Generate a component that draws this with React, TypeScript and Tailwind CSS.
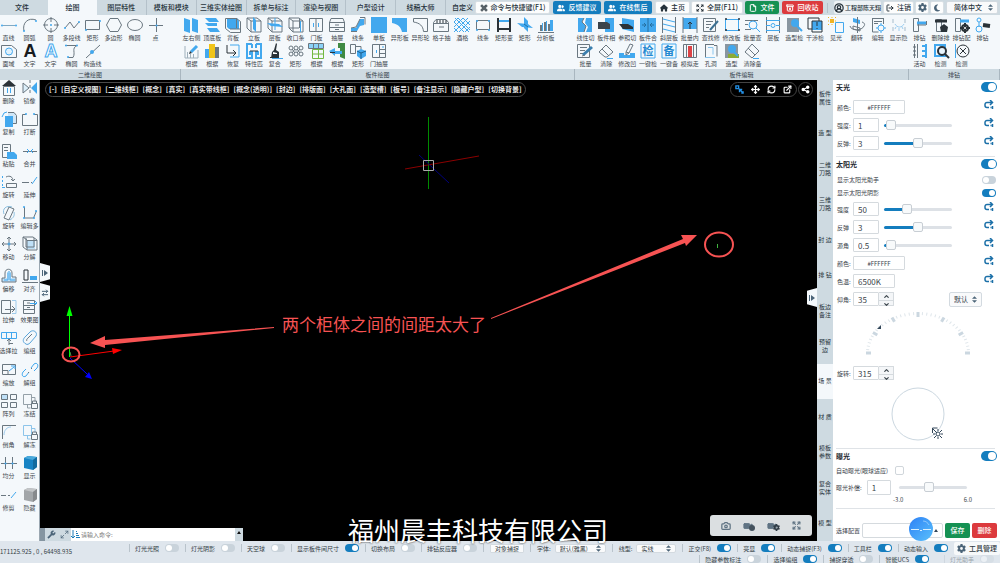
import React from "react"
import {
  ArchiveX as TrashIcon,
  ArrowUpDown as StepIcon,
  Camera as CameraIcon,
  ChevronDown,
  ChevronUp,
  Command as CommandIcon,
  Expand as ExpandIcon,
  File as FileIcon,
  LogOut as LogoutIcon,
  Maximize2 as GrowIcon,
  Move as MoveIcon,
  RefreshCw as RefreshIcon,
  ExternalLink as OpenIcon,
  CircleUserRound as UserIcon,
  Video as VideoIcon,
  Wrench as WrenchIcon,
} from "lucide-react"
import { FaGear, FaHouse, FaMoon, FaShareNodes, FaUserGroup } from "react-icons/fa6"

// ---- Icon drawings, all on a 16x16 grid ----

type Shape = { d: string; fill?: string; stroke?: string; w?: number }
type Icon = { shapes: Shape[]; text?: string; textFill?: string; textStroke?: string; textSize?: number }

const BLUE = "#42a8ee"
const GRAY = "#6a7780"
const DARK = "#2a3238"

const g = (d: string): Shape => ({ d, stroke: GRAY })
const k = (d: string, w = 2): Shape => ({ d, stroke: DARK, w })
const b = (d: string, w = 1): Shape => ({ d, stroke: BLUE, w })
const fb = (d: string): Shape => ({ d, fill: BLUE })
const fk = (d: string): Shape => ({ d, fill: DARK })
const fill = (d: string, color: string): Shape => ({ d, fill: color })
const c = (x: number, y: number, r: number) => `M${x - r} ${y}a${r} ${r} 0 1 0 ${2 * r} 0a${r} ${r} 0 1 0 ${-2 * r} 0`
const icon = (...shapes: Shape[]): Icon => ({ shapes })

const CABINET = "M1 1h10l4 3v11H5L1 11zM5 4h10M5 4v11M1 1l4 3"

const ICONS: Record<string, Icon> = {
  line: icon({ d: "M2 8.500h12", stroke: "#7fa9c4" }, fb(c(1, 8.5, 1)), fb(c(15, 8.5, 1))),
  arc: icon(g("M2 14C0 6 6 0 14 3"), fb(c(2, 14, 1)), fb(c(14, 4, 1))),
  circle: icon(g(c(8, 8, 6.5)), g("M8 0v5M8 11v5M0 8h5M11 8h5"), fb(c(8, 8, 1))),
  polyline: icon(g("M1 11l5-6 4 6 5-6"), fb(c(1, 11, 1)), fb(c(15, 5, 1))),
  rect: icon(g("M.5 3.500h14v9H.5z"), fb(c(1, 13, 1)), fb(c(15, 4, 1))),
  polygon: icon(g("M4 1.500h8l3.500 6.500-3.500 6.500H4L.5 8z")),
  ellipse: icon(g("M.5 8a7.500 5.500 0 1 0 15 0a7.500 5.500 0 1 0-15 0")),
  point: icon(g("M8.500 1v14M1 8.500h14"), fb(c(8.5, 8.5, 1))),
  region: icon(g("M.5 2.500h10l5 4v8H.5z"), { d: c(8, 8.5, 3.5), stroke: BLUE, fill: "#e0f1fc" }),
  textSolid: { shapes: [], text: "A", textFill: "#171b1f", textSize: 18 },
  textOutline: { shapes: [], text: "A", textFill: "#fff", textStroke: BLUE, textSize: 18 },
  curve: icon(g("M1 2.500h12c-6 3-1 7-4 12H4"), fb(c(2, 2.5, 1)), fb(c(13, 2.5, 1)), fb(c(4, 14, 1))),
  construct: icon(g("M1 15L15 2"), fb(c(7, 9, 2))),
  sidePanels: icon(fb("M1 1l6 2v13l-6-2zM9 1l6 2v13l-6-2z")),
  topBottom: icon(fb("M1 1h11l3 4H5zM1 6h12v3H4zM3 11h10l3 4H6z")),
  backPanel: icon(fb("M2 1h10l2 3v8H4L2 10z"), g("M.5 1.500h11l4 3v11h-10l-5-4zM5 12h10M11.500 1v10")),
  standPanel: icon(g(CABINET), fb("M7 0l3 3v12l-3-3z")),
  layerPanel: icon(g(CABINET), fb("M0 6l12 1 4 3-12-1z"), b("M8 1v12")),
  closeStrip: icon(g(CABINET), g("M11.500 1v10M1 11h10"), b("M12.500 4v11")),
  door: icon(g("M1.500 1.500h13v13h-13zM8 1v14"), b("M5.500 6v4M10.500 6v4")),
  drawer: icon(g("M2 1.500h12l1.500 4v9H.5v-9zM0 5.500h16M0 10.500h16M6 8h4M6 12.500h4")),
  molding: icon(fb("M10 2h4v6l-4 1-3 5H1v-3h5z"), g("M10 .5h5v7M1 11l5-1 4-8M1 14.500h6")),
  board: icon(fb("M0 0h16v16H0z")),
  shapedBoard: icon(fb("M0 1h15v14h-5C9 10 6 7 0 6z")),
  shapedOutline: icon(g("M.5 1.500h14v13h-4C10 9 7 6 .5 5z")),
  gridDrawer: icon(g("M3 2.500h10l2.500 3v9H.5v-9zM0 6.500h16"), k("M4 3v3M7 3v3M10 3v3M13 3v3", 1), g("M6 10h5")),
  wineRack: icon(b("M0 5l4-4 12 12M0 10l9-9 7 7M0 15L14 1M5 15L16 4M11 15l5-5M4 15l-4-4M10 15L0 5M15 15L1 1")),
  strip: icon(g("M1.500 3.500h13v9h-13z"), fb(c(2, 4, 1)), fb(c(14, 4, 1)), fb(c(2, 13, 1)), fb(c(14, 13, 1))),
  rectMorph: icon(k("M2 1v14M14 1v14M2 12h12"), b("M3 4h10", 2)),
  crossPlanes: icon(fb("M0 6l11 1 5 4-11-1z"), fb("M7 0l4 4v11l-4-4z"), { d: "M7 7l4 3", stroke: "#1c70a8" }),
  analysis: icon(fill("M2 8h2v6H2zM6 5h2v9H6zM10 7h2v7h-2z", GRAY), fb("M4 6h1v8H4zM8 4h1v10H8zM12 3h3v11h-3z"), g("M0 15.500h16")),
  editChart: icon({ d: "M2 3v12h13V7M4.500 9v6M7.500 11v4M10.500 11v4", stroke: "#9fb0bb" }, b("M8 9l6-6", 3), fk("M6 11l1-3 2 2z")),
  barChart: icon(fb("M1 6h4v9H1z"), fill("M5 1h6v14H5z", "#f0c419"), fill("M11 4h4v11h-4z", GRAY)),
  restore: icon(b("M5 2h9v12H5", 1), k("M2 2v8h8M8 7l3 3-3 3", 1)),
  match: icon(b("M6 1H1v14h5v-4H4V9h3M10 1h5v14h-5v-4h2V9H9M6 1v4M10 1v4", 2), k("M4 8h8", 1)),
  brush: icon(fk("M9 0l1 1-1 6 3 2v6H4l1-6 2-2z"), fill("M6 9l4 1v1H6z", "#fff"), b("M5 15.500h11"), k("M3 14.500h7", 1)),
  mesh: icon(g(`${c(3, 5, 2)}${c(8, 5, 2)}${c(13, 5, 2)}${c(3, 11, 2)}${c(8, 11, 2)}${c(13, 11, 2)}M4 6l3 4M7 6l-3 4M9 6l3 4M12 6l-3 4`)),
  gridPlan: icon(fill("M1 1h14v4H1z", "#8bd2f7"), g("M.5 .5h15v5H.5zM5.500 0v5M10.500 0v5"), { d: "M4.500 6.500h11v9h-11zM10.500 6v9M5 11h10", stroke: "#72b840" }),
  greenPanel: icon(fill("M9 0h7v16l-5-2V5H9z", "#3f8a43"), fb("M0 8l6-3v3h7v3H6v2z"), fk("M1 9h5v1H1z")),
  cubeCopy: icon(g("M.5 1.500h5v9h-5zM6 3.500h5v3"), fb("M7 8l4-2 5 2v5l-5 3-4-3z"), { d: "M7 8l4 2 5-2M11 10v6", stroke: "#1c5d8a" }),
  doorDrawer: icon(g("M1.500 1.500h13v13h-13zM8.500 1v14M8 6.500h7M8 10.500h7"), b("M5.500 7v3M11 4h2")),
  cutLine: icon(fb("M1 1h6l-2 4 4 4-2 6H1zM9 1h6v14H9l2-5-3-4z"), g("M7 1L5 5l4 4-2 6")),
  boardCut: icon(fb("M7 1h9v14H7z"), fill("M0 5h9l3 2v5H0z", "#3b444b")),
  refCut: icon(fb("M3 1l12 2v12L3 12z"), fk("M0 7h9l5 3v2H4z")),
  merge: icon(fb("M0 1h16v14H0z"), { d: "M8 1v14M2 8h4M14 8h-4M4 6l2 2-2 2M12 6l-2 2 2 2", stroke: "#256f9f" }),
  slantShelf: icon(g("M1.500 0v16M14.500 0v16"), b("M2 2l12 3M2 7l12 3M2 12l12 3")),
  batchInner: icon(fb("M1 1h14v11H1z"), g("M1 0v16M15 0v16"), k("M8 12V5M6 7l2-2 2 2", 1)),
  findEdit: icon(g("M.5 1.500h12v13H.5zM3 4.500h7M3 7.500h5M3 10.500h3"), { d: "M7 13l8-9", stroke: "#3b6f92", w: 2 }),
  modBoard: icon(b("M1.500 2.500h13v11h-13z"), fk(c(2, 2, 1)), fk(c(15, 2, 1)), fk(c(2, 13, 1)), fk(c(15, 13, 1))),
  batchFind: icon(g("M1 3.500h13M1 7.500h3M1 12.500h6"), b(c(9, 8, 4)), b("M12 11l4 4")),
  shelf: icon(g("M1.500 0v16M14.500 0v16"), b("M1 3.500h14M1 8.500h4M11 8.500h4M1 13.500h14"), b(c(8, 8.5, 2))),
  shapeCheck: icon(fill("M1 1h12v14H1z", "#8996a0"), fb(c(9, 6, 4)), b("M11 9l5 5", 2)),
  interfere: icon(k("M1 1h11v11H1z", 1), fb("M5 4h10v9H5z"), k("M5 4h10v11H5zM10 5v4M10 11v1", 1)),
  light: icon(fill("M2 2h4v4H2z", "#f0b323"), { d: "M0 0l1 1M8 0L7 1M0 8l1-1M4 0v1M0 4h1M8 4H7M4 8V7", stroke: "#f0b323" }, b("M7.500 5.500h8v10h-8z")),
  flip: icon(fb("M4 1l7 2v4L4 5z"), g("M8.500 0v16M1 9c1 5 12 5 14 0M13 5c3 1 3 3 2 4M4 9l7 2v3l-7-2z")),
  editDoc: icon(g("M2.500 1v14h6M13.500 1v6M2 1.500h12M4 4.500h8M4 6.500h4"), b(c(11, 11, 3)), b("M11 6v2M11 14v2M6 11h2M14 11h2")),
  showHide: icon({ d: "M2 2v4M14 2v4M2 10v4M14 10v4", stroke: "#a7bccb" }, { d: "M4 7c2 4 7 4 9 0M5 10l-1 2M8 11v3M11 10l1 2", stroke: "#9ccdf0" }),
  drill: icon(g("M1.500 1.500h5v13h-5z"), b("M5 6h9", 3), g("M14.500 4v4M5 8h9")),
  drillDelete: icon(g("M3.500 2.500h5v12h-5z"), k("M2 4h12", 3), fk("M7 10l4-3 4 3-1 5H8z")),
  drillConfig: icon(g("M1.500 1.500h5v13h-5z"), b("M6 4h9", 3), k(c(11, 11, 3), 2), fk("M10 6h2v10h-2zM6 10h10v2H6z"), fill(c(11, 11, 1), "#fff")),
  drillNode: icon(b(c(4, 3, 2)), b("M4 5v5"), b(c(4, 12, 3)), k("M8 8l7 1", 4)),
  batchDoc: icon(g("M.5 1.500h12v13H.5zM3 4.500h7M3 7.500h5M3 10.500h3"), { d: "M6 12l9-8", stroke: "#3b7fae", w: 3 }, g("M5 13l3-1")),
  erase: icon(g("M1 9l7-7 7 7-6 5H7zM4 6l7 7"), b("M9 15.500h6")),
  concave: icon(fb("M0 10h5v2h6v-2h5v5H0z"), g("M7 9l4-8 3 1-4 8zM7 9v3l3-2")),
  oneCheck: { shapes: [b("M1 1h14v14H1z", 1)], text: "检", textFill: "#2389d2", textSize: 11 },
  oneRemark: { shapes: [b("M1 1h14v14H1z", 1)], text: "备", textFill: "#2389d2", textSize: 11 },
  simulate: icon(g("M1.500 1.500h13v13h-13zM4.500 1v14M11.500 1v14"), fill("M6 3h4v11H6z", "#dc4346")),
  hole: icon(g("M2.500 1v13M2 1.500h9M11 2.500h3v11"), { d: "M2 14.500h10M5 4.500h5v7", stroke: "#8bc6ee" }),
  shape: icon(fill("M1 1h13v14H1z", "#8996a0"), fill("M4 11h11v4H4z", "#8cab35"), fb(c(8, 6, 4)), b("M10 9l4 4", 2)),
  eraseRemark: icon(g("M1 9l7-8 7 7-7 7zM4 5l7 7"), b("M9 15.500h6")),
  active: icon(g("M2.500 1v14M5.500 1v14"), { d: "M1 4h3M1 8h3M1 12h3", stroke: "#5c6970" }, b("M14 1v14M10 3h4M10 8h4M10 13h4", 2)),
  detectLens: icon(b("M2 2h10v11H2z", 2), { d: c(9, 8, 4), stroke: DARK, fill: "#e9f5fd", w: 2 }, k("M12 11l4 4", 2)),
  detectCross: icon(b("M1.500 1v14"), k(c(9, 8, 6), 1), k("M6 5l6 6M12 5l-6 6", 1)),
  remove: icon(fk("M8 0l7 6H1z"), g("M2.500 6.500h11v9h-11z"), b("M6.500 8v5M9.500 8v5")),
  mirror: icon(fill("M1 3l6 5-6 5z", "#dceffb"), g("M1 3l6 5-6 5zM8 0v3M8 5v3M8 10v3"), fb("M15 2v12L9 8z")),
  copy: icon(fill("M7 1h6l2 3v9H7z", "#cfe7f8"), g("M7 1.500h6l2.500 3v8H12"), fb("M4 5h8v11H4z"), b("M1 6l2-4 3-1")),
  breakLine: icon(g("M4 3.500H.5v11h15v-11H12"), fb(c(4, 3, 1)), fb(c(12, 3, 1))),
  paste: icon(g("M1.500 1.500h8v13h-8zM3 4.500h4M3 7.500h4"), fb("M6 9h7l3 3v4H6z")),
  join: icon(g("M1 8.500h14"), b("M5 6l2 2-2 2M11 6L9 8l2 2")),
  rotateCopy: icon({ d: "M1.500 2v2M1.500 6v2M1.500 10v2M1 13.500h3", stroke: BLUE }, g("M5.500 9.500h10v4h-10zM5 3c4-2 7 0 7 4M10 5l2 2 2-2")),
  extend: icon(g("M0 8.500h7M9 8.500h1"), b("M10 10l5-7")),
  rotate: icon(g("M8 2l5 2-5 11-5-2z"), { d: "M3 9C1 4 5 0 11 2M13 7c1 4-1 6-4 8", stroke: "#8cbfdf" }),
  editPoly: icon(g("M2.500 2v11h9l3-7"), fb(c(2, 2, 1)), fb(c(2, 13, 1)), fb(c(12, 13, 1)), fb(c(14, 6, 1))),
  move: icon(g("M8 1v14M1 8h14M6 3l2-2 2 2M6 13l2 2 2-2M3 6L1 8l2 2M13 6l2 2-2 2"), b(c(8, 8, 1))),
  explode: icon(fill("M5 5h8v8H5z", "#bfe0f7"), g("M1 1h10l4 3v10H5L1 11zM5 4.500h10M5 4v10M1 1l4 3M4 2v9h8V2")),
  offset: icon(fill("M1 10h5V5h4v5h5v4H1z", "#bfe0f7"), g("M1 10h3V5c0-5 7-5 7 0v4h4v5H1z"), b("M3 12h4V5c0-2 2-2 2 0v7h5")),
  align: icon(k("M2 2h4v10H2z", 1), g("M0 14.500h16"), fb("M8 8h7v4H8z")),
  stretch: icon(g("M.5 1.500h9v13h-9zM4 10.500h10M11 7l3 3-3 3"), { d: "M11 1.500h4v13h-4", stroke: "#9dcbec" }),
  effect: icon(g("M1.500 1.500h11v13h-11zM2 6.500h11M2 10.500h11M5 4h3M5 8.500h3"), b("M8 4.500h7M13 2l2 2-2 2")),
  selectStretch: icon(b("M.5 2.500h15v6H.5zM5.500 2v6M10.500 2v6"), g("M8 15V9M6 11l2-2 2 2M8 13.500h4")),
  group: icon({ d: "M4 14c-4-2-3-5-1-7l5-5c3-3 8 0 6 4l-6 7c-1 1-3 2-4 1z", stroke: "#5aa5da", w: 1 }, g("M5 11c-1-1 0-2 1-3l4-4")),
  scale: icon(g("M1.500 2.500h13v10h-13zM1 8.500h6v4"), b("M8 9l5-4M10 4h4v3")),
  ungroup: icon(b("M7 10l-3 4c-3 2-5-1-3-4l3-3M9 6l3-4c3-2 5 1 3 4l-3 3", 1), g("M6 11l1-1M9 7l1-1")),
  array: icon(fill("M1 1h6v6H1z", "#bfe0f7"), g("M.5 1.500h6v5h-6zM9.500 1.500h6v5h-6zM.5 9.500h6v5h-6zM9.500 9.500h6v5h-6z")),
  freeze: icon({ d: "M1.500 1.500h8v10h-8zM9 4.500h4v4M5.500 12v3h3", stroke: "#94a0a8" }, g("M9.500 10.500h6v5h-6zM10.500 10V8h4v2")),
  chamfer: icon(g("M1.500 15V1.500H15"), { d: "M3 11C3 6 6 3 10 3", stroke: "#9dcbec" }),
  unfreeze: icon({ d: "M1.500 1.500h8v10h-8zM9 4.500h4v4M5.500 12v3h3", stroke: "#8cc4ea" }, g("M9.500 10.500h6v5h-6zM10.500 10V8h4v2")),
  divide: icon(g("M4.500 2v12M11.500 2v12M0 8.500h16"), fb(c(4.5, 8.5, 1)), fb(c(11.5, 8.5, 1))),
  show: icon(fill("M2 3l4-2 9 1v10l-4 3-9-2z", "#1783c4"), fill("M2 3l4-2 9 1-4 3z", "#49a9db"), fill("M11 5l4-3v10l-4 3z", "#116a9f")),
  trim: icon(g("M0 8.500h5M7 8.500h2"), b("M10 11l5-6")),
  hide: icon(fill("M2 3l4-2 9 1v10l-4 3-9-2z", "#a2a6a9"), fill("M2 3l4-2 9 1-4 3z", "#c2c5c7"), fill("M11 5l4-3v10l-4 3z", "#86898c")),
}

function ToolGlyph({ name }: { name: string }) {
  const item = ICONS[name]
  const latin = item.text === "A"
  return (
    <svg viewBox="0 0 16 16" className="size-4 shrink-0 overflow-visible" aria-hidden="true">
      {item.shapes.map((s, i) => (
        <path key={i} d={s.d} fill={s.fill ?? "none"} stroke={s.stroke ?? "none"} strokeWidth={s.w ?? 1} />
      ))}
      {item.text && (
        <text
          x="8"
          y={latin ? 14 : 12}
          textAnchor="middle"
          fontSize={item.textSize}
          fontWeight="700"
          fontFamily={latin ? "Liberation Sans, sans-serif" : undefined}
          fill={item.textFill}
          stroke={item.textStroke}
        >
          {item.text}
        </text>
      )}
    </svg>
  )
}

// ---- Data ----

const TABS = ["绘图", "图层特性", "模板和模块", "三维实体绘图", "拆单与标注", "渲染与视图", "户型设计", "线稿大师"]

type Tool = [label: string, icon: string]

const DRAW_TOOLS: Tool[][] = [
  [["直线", "line"], ["圆弧", "arc"], ["圆", "circle"], ["多段线", "polyline"], ["矩形", "rect"], ["多边形", "polygon"], ["椭圆", "ellipse"], ["点", "point"]],
  [["面域", "region"], ["文字", "textSolid"], ["文字", "textOutline"], ["椭圆", "curve"], ["构造线", "construct"]],
]

const BOARD_TOOLS: Tool[][] = [
  [
    ["左右侧", "sidePanels"], ["顶底板", "topBottom"], ["背板", "backPanel"], ["立板", "standPanel"], ["层板", "layerPanel"], ["收口条", "closeStrip"],
    ["门板", "door"], ["抽屉", "drawer"], ["线条", "molding"], ["单板", "board"], ["异形板", "shapedBoard"], ["异形轮", "shapedOutline"],
    ["格子抽", "gridDrawer"], ["酒格", "wineRack"], ["线条", "strip"], ["矩形变", "rectMorph"], ["矩形", "crossPlanes"], ["分析板", "analysis"],
  ],
  [
    ["根据", "editChart"], ["根据", "barChart"], ["恢复", "restore"], ["特性匹", "match"], ["复合", "brush"],
    ["矩形", "mesh"], ["根据", "gridPlan"], ["根据", "greenPanel"], ["矩形", "cubeCopy"], ["门抽屉", "doorDrawer"],
  ],
]

const EDIT_TOOLS: Tool[][] = [
  [
    ["线性切", "cutLine"], ["板件相", "boardCut"], ["参照切", "refCut"], ["板件合", "merge"], ["斜层板", "slantShelf"], ["批量内", "batchInner"],
    ["查找修", "findEdit"], ["修改板", "modBoard"], ["批量查", "batchFind"], ["层板", "shelf"], ["造型检", "shapeCheck"], ["干涉检", "interfere"],
    ["见光", "light"], ["翻转", "flip"], ["编辑", "editDoc"], ["显示隐", "showHide"],
  ],
  [
    ["批量", "batchDoc"], ["清除", "erase"], ["修改凹", "concave"], ["一键检", "oneCheck"], ["一键备", "oneRemark"],
    ["模拟走", "simulate"], ["孔洞", "hole"], ["造型", "shape"], ["清除备", "eraseRemark"],
  ],
]

const DRILL_TOOLS: Tool[][] = [
  [["排钻", "drill"], ["删除排", "drillDelete"], ["排钻配", "drillConfig"], ["排钻", "drillNode"]],
  [["活动", "active"], ["检测", "detectLens"], ["检测", "detectCross"]],
]

const SIDE_TOOLS: Tool[] = [
  ["删除", "remove"], ["镜像", "mirror"],
  ["复制", "copy"], ["打断", "breakLine"],
  ["粘贴", "paste"], ["合并", "join"],
  ["旋转", "rotateCopy"], ["延伸", "extend"],
  ["旋转", "rotate"], ["编辑多", "editPoly"],
  ["移动", "move"], ["分解", "explode"],
  ["偏移", "offset"], ["对齐", "align"],
  ["拉伸", "stretch"], ["效果图", "effect"],
  ["选择拉", "selectStretch"], ["编组", "group"],
  ["缩放", "scale"], ["解组", "ungroup"],
  ["阵列", "array"], ["冻结", "freeze"],
  ["倒角", "chamfer"], ["解冻", "unfreeze"],
  ["均分", "divide"], ["显示", "show"],
  ["修剪", "trim"], ["隐藏", "hide"],
]

const VIEW_MENU = [
  "-", "自定义视图", "二维线框", "概念", "真实", "真实带线框", "概念(透明)", "封边",
  "排版面", "大孔面", "造型槽", "板号", "备注显示", "隐藏户型", "切换背景",
]

const PANEL_TABS = [
  ["板件", "属性"], ["造 型"], ["二维", "刀路"], ["三维", "刀路"], ["封 边"], ["排 钻"], ["板边", "备注"],
  ["预留", "边"], ["场 景"], ["材 质"], ["模板", "参数"], ["复合", "实体"], ["模 型"],
]

// ---- Shared controls ----

function ToolButton({ tool: [label, name] }: { tool: Tool }) {
  return (
    <button type="button" className="flex min-w-0 flex-col items-center gap-px whitespace-nowrap">
      <ToolGlyph name={name} />
      <span className="text-[6px] leading-[8px] text-[#3d464d]">{label}</span>
    </button>
  )
}

function RibbonGroup({ title, rows, className, cols }: { title: string; rows: Tool[][]; className: string; cols: string }) {
  return (
    <section className={`flex flex-col overflow-hidden ${className}`}>
      <div className="flex-1 pt-[2px]">
        {rows.map((row, i) => (
          <div key={i} className={`grid h-[26px] ${cols}`}>
            {row.map((tool, j) => <ToolButton key={j} tool={tool} />)}
          </div>
        ))}
      </div>
      <h2 className="h-[11px] border-r border-[#a9b6bf] bg-[#cedae1] text-center text-[6px] leading-[11px] text-[#38444d]">{title}</h2>
    </section>
  )
}

function Toggle({ label, on = false, large = false }: { label: string; on?: boolean; large?: boolean }) {
  return (
    <input
      type="checkbox"
      role="switch"
      aria-label={label}
      defaultChecked={on}
      className={`shrink-0 appearance-none rounded-full bg-[#c9d3db] before:block before:rounded-full before:bg-white checked:bg-[#147dbe] ${
        large
          ? "h-[10px] w-4 p-px before:size-2 checked:pl-[7px]"
          : "h-2 w-[14px] p-px before:size-[6px] checked:pl-[7px]"
      }`}
    />
  )
}

function StatusToggle({ label, on, faded }: { label: string; on?: boolean; faded?: boolean }) {
  return (
    <label className={`flex h-2 items-center gap-[6px] border-l border-[#b9c3cb] pr-[6px] pl-[5px] ${faded ? "opacity-40" : ""}`}>
      {label}
      <Toggle label={label} on={on} />
    </label>
  )
}

function Slider({ label, value, plain = false }: { label: string; value: number; plain?: boolean }) {
  const [pos, setPos] = React.useState(value)
  const track = plain ? "#dde1e6" : `linear-gradient(to right, #147dbe ${pos}%, #dde1e6 ${pos}%)`
  return (
    <input
      type="range"
      aria-label={label}
      value={pos}
      onChange={e => setPos(Number(e.target.value))}
      style={{ background: track }}
      className="h-[3px] w-[68px] appearance-none rounded-full [&::-webkit-slider-thumb]:size-[10px] [&::-webkit-slider-thumb]:appearance-none [&::-webkit-slider-thumb]:rounded-[2px] [&::-webkit-slider-thumb]:border [&::-webkit-slider-thumb]:border-[#c8ced4] [&::-webkit-slider-thumb]:bg-[#f8fafb]"
    />
  )
}

function ResetButton() {
  return (
    <button type="button" aria-label="重置" className="ml-auto pr-[6px]">
      <svg viewBox="0 0 10 10" className="-mt-1 size-[10px]" fill="none" stroke="#1c70a8" strokeWidth="1.500">
        <path d="M9 2.500H3a2 2 0 0 0-2 2v1a2 2 0 0 0 2 2h2M6 0l2.500 2.500L6 5M6.500 7.500h1M8.500 6v3" />
      </svg>
    </button>
  )
}

function Field({ label, value, width, children }: { label: string; value: string; width: string; children?: React.ReactNode }) {
  return (
    <div className="flex h-[18px] items-center">
      <label className="flex items-center text-[6px]">
        <span className="w-4 whitespace-nowrap">{label}</span>
        <input
          type="text"
          defaultValue={value}
          className={`h-[14px] rounded-[1px] border border-[#d5dade] bg-white text-[#3b444b] ${width}`}
        />
      </label>
      {children}
    </div>
  )
}

const NUMBER_BOX = "w-[26px] px-1 text-[8px]"
const COLOR_BOX = "w-[52px] text-center text-[6px]"

function Stepper() {
  return (
    <div className="flex h-[14px] w-[15px] flex-col rounded-r-[1px] border border-l-0 border-[#d5dade] bg-[#f4f6f8]">
      <button type="button" aria-label="增加" className="flex flex-1 items-center justify-center border-b border-[#d5dade]">
        <ChevronUp className="size-[7px]" strokeWidth={4} />
      </button>
      <button type="button" aria-label="减少" className="flex flex-1 items-center justify-center">
        <ChevronDown className="size-[7px]" strokeWidth={4} />
      </button>
    </div>
  )
}

function CaretPair({ className }: { className: string }) {
  return (
    <svg viewBox="0 0 6 8" className={`pointer-events-none h-[7px] w-[5px] fill-[#4b6478] ${className}`}>
      <path d="M3 0l3 3H0zM3 8l3-3H0z" />
    </svg>
  )
}

function Select({ label, value, className }: { label: string; value: string; className: string }) {
  return (
    <span className="relative flex items-center">
      <select aria-label={label} className={`appearance-none rounded-[2px] border border-[#d3dae0] bg-[#f9fafb] ${className}`}>
        <option>{value}</option>
      </select>
      <CaretPair className="absolute right-[5px]" />
    </span>
  )
}

function SectionHeader({ title }: { title: string }) {
  return (
    <div className="flex h-[14px] items-center justify-between pr-[3px]">
      <h3 className="text-[7px] font-bold text-[#1f292f]">{title}</h3>
      <Toggle label={title} on large />
    </div>
  )
}

// ---- Page parts ----

function Header() {
  const btn = "flex h-[13px] items-center justify-center gap-[3px] rounded-[2px] whitespace-nowrap"
  const light = "border border-[#d8dfe4] bg-[#fcfdfd]"
  return (
    <header className="flex h-[15px] bg-[#cedae1] text-[7px] font-medium text-[#26323b]">
      <nav className="flex min-w-0 flex-1 overflow-hidden whitespace-nowrap">
        <button type="button" className="w-12 shrink-0 pr-1">文件</button>
        {TABS.map(tab => (
          <button
            key={tab}
            type="button"
            className={`flex-1 ${tab === "绘图" ? "bg-[#f4f8fb]" : "border-r border-[#b4c1ca]"}`}
          >
            {tab}
          </button>
        ))}
        <button type="button" className="w-[29px] shrink-0 pl-[6px] text-left">自定义</button>
      </nav>
      <div className="flex shrink-0 items-center pr-[2px]">
        <button type="button" className={`${btn} ${light} w-[75px]`}>
          <CommandIcon className="size-2 shrink-0" strokeWidth={3} />
          命令与快捷键(F1)
        </button>
        <button type="button" className={`${btn} ml-[3px] w-[48px] bg-[#147dbe] text-white`}>
          <FaUserGroup className="size-2" />
          反馈建议
        </button>
        <button type="button" className={`${btn} ml-[3px] w-[48px] bg-[#147dbe] text-white`}>
          <FaUserGroup className="size-2" />
          在线售后
        </button>
        <a href="#home" className={`${btn} ${light} ml-[3px] w-[35px]`}>
          <FaHouse className="size-2" />
          主页
        </a>
        <button type="button" className={`${btn} ${light} ml-px w-[52px]`}>
          <ExpandIcon className="size-2 shrink-0" strokeWidth={3} />
          全屏(F11)
        </button>
        <button type="button" className={`${btn} ml-[2px] w-[34px] bg-[#159153] text-white`}>
          <FileIcon className="size-2" strokeWidth={3} />
          文件
        </button>
        <button type="button" className={`${btn} ml-[3px] w-[41px] bg-[#dc3a3d] text-white`}>
          <TrashIcon className="size-2" strokeWidth={3} />
          回收站
        </button>
        <span className="ml-1 h-[10px] border-l border-[#b4c1ca]" />
        <button type="button" className="ml-[6px] flex items-center gap-px rounded-[2px] bg-[#edf2f5] text-[6px] leading-[13px] whitespace-nowrap">
          <UserIcon className="size-[10px]" strokeWidth={3} />
          工程部陈天翔
        </button>
        <button type="button" className={`${btn} ${light} ml-[2px] w-[31px]`}>
          <LogoutIcon className="size-2" strokeWidth={3} />
          注销
        </button>
        <button type="button" aria-label="设置" className={`${btn} ${light} ml-px w-[14px] text-[#4b6478]`}>
          <FaGear className="size-[9px]" />
        </button>
        <button type="button" aria-label="深色模式" className={`${btn} ${light} mr-[2px] ml-px w-[14px] text-[#4b6478]`}>
          <FaMoon className="size-2" />
        </button>
        <Select label="语言" value="简体中文" className="h-[13px] w-[52px] pl-[7px]" />
      </div>
    </header>
  )
}

function ViewportDrawing() {
  const ANNO = "#f75353"
  return (
    <svg className="absolute inset-0 size-full overflow-hidden" fill="none">
      {/* crosshair cursor */}
      <path d="M388.500 37v72" stroke="#008a00" />
      <path d="M365 89l74-13" stroke="#8b0000" />
      <path d="M379 75l30 28" stroke="#00007c" />
      <path d="M383.500 80.500h10v10h-10z" stroke="#aaa" />
      {/* world axes */}
      <path d="M29.500 277v-42" stroke="#0f0" />
      <path d="M29.500 226l3 10h-6z" fill="#0f0" />
      <path d="M30 277l44-6" stroke="#f00" />
      <path d="M82 270l-10-2 1 6z" fill="#f00" />
      <path d="M30 278l17 16" stroke="#00f" />
      <path d="M52 299l-7-2 4-5z" fill="#00f" />
      <path d="M30 272l1 4" stroke="#4c9a4c" />
      {/* annotations */}
      <ellipse cx="31" cy="274.500" rx="8.500" ry="7" stroke={ANNO} strokeWidth="2" />
      <path d="M234 247L65 260v-4L50 263l15 5v-3L234 248z" fill={ANNO} />
      <path d="M451 238L643 159l-2-4h16l-11 11-1-3L451 239z" fill={ANNO} />
      <ellipse cx="679" cy="164.500" rx="14" ry="12" stroke={ANNO} strokeWidth="2" />
      <path d="M677.500 164v4" stroke="#3fb53f" />
    </svg>
  )
}

function Handle({ side, children }: { side: "left" | "right"; children: React.ReactNode }) {
  return (
    <button
      type="button"
      aria-label="折叠面板"
      className={`flex h-[19px] w-[10px] items-center justify-center bg-[#f4f8fb] text-[#4b6478] ${
        side === "left"
          ? "[clip-path:polygon(0_0,100%_15%,100%_85%,0_100%)]"
          : "[clip-path:polygon(0_15%,100%_0,100%_100%,0_85%)]"
      }`}
    >
      {children}
    </button>
  )
}

const handleArrow = (
  <svg viewBox="0 0 6 6" className="size-[6px] fill-current">
    <path d="M0 0h1v6H0zM2 0l4 3-4 3z" />
  </svg>
)

function Viewport() {
  return (
    <main className="relative flex min-w-0 flex-1 flex-col bg-black">
      <ViewportDrawing />

      <div className="relative flex items-center justify-between pt-[2px] pr-1 pl-[5px]">
        <nav className="flex h-[15px] items-center gap-1 rounded-full border border-[#4a4a4a] px-[3px] text-[7px] font-bold whitespace-nowrap text-[#e8e8e8]">
          {VIEW_MENU.map(item => <button key={item} type="button">[{item}]</button>)}
        </nav>
        <div className="flex gap-[1px] text-white">
          <div className="flex h-[15px] items-center gap-[7px] rounded-full border border-[#444] px-[4px]">
            <button type="button" aria-label="选择">
              <svg viewBox="0 0 10 10" className="size-[9px]" fill="none" stroke="#2492e8" strokeWidth="1.500">
                <path d="M1 1h3v3H1zM4 4l5 5M5 8V5h3M7 9h2V7" />
              </svg>
            </button>
            <button type="button" aria-label="平移"><MoveIcon className="size-[9px]" strokeWidth={3} /></button>
            <button type="button" aria-label="旋转"><RefreshIcon className="size-[9px]" strokeWidth={3} /></button>
            <button type="button" aria-label="弹出"><OpenIcon className="size-[9px]" strokeWidth={3} /></button>
          </div>
          <button type="button" aria-label="分享" className="flex size-[15px] items-center justify-center rounded-full border border-[#444]">
            <FaShareNodes className="size-[9px]" />
          </button>
        </div>
      </div>

      <p className="absolute top-[232px] left-[242px] text-[17px] leading-6 whitespace-nowrap text-[#f75353]">
        两个柜体之间的间距太大了
      </p>

      <div className="absolute top-[183px] left-0 flex flex-col gap-px">
        <Handle side="left">{handleArrow}</Handle>
        <Handle side="left"><StepIcon className="size-[8px] rotate-90" strokeWidth={3} /></Handle>
      </div>
      <div className="absolute top-[208px] right-0">
        <Handle side="right">{handleArrow}</Handle>
      </div>

      <div className="relative mt-auto flex items-end justify-between pr-[5px]">
        <div className="flex h-[13px] w-[203px] items-center bg-[#cedae1] text-[#4b6478]">
          <span className="h-full w-[5px] bg-[#8595a1]" />
          <button type="button" aria-label="命令设置" className="pr-1 pl-[2px]">
            <WrenchIcon className="size-[9px] fill-current" strokeWidth={1} />
          </button>
          <button type="button" aria-label="展开命令行" className="pr-[2px]"><GrowIcon className="size-[9px]" strokeWidth={2} /></button>
          <span className="flex h-full flex-1 items-center bg-white">
            <svg viewBox="0 0 9 9" className="size-[9px] shrink-0" fill="none" stroke="#1a7bb8">
              <path d="M2 0v8M0 6l2 2 2-2M5 1.500h1M5 3.500h2M5 5.500h3M5 7.500h4" />
            </svg>
            <input type="text" aria-label="命令" placeholder="请输入命令:" className="min-w-0 flex-1 pl-px text-[6px] placeholder:text-[#777]" />
          </span>
          <button type="button" aria-label="历史命令" className="h-full px-[2px] pb-1">
            <svg viewBox="0 0 4 3" className="h-[3px] w-1 fill-[#111]"><path d="M2 0l2 3H0z" /></svg>
          </button>
        </div>
        <div className="mb-[5px] flex h-[21px] w-[102px] items-center justify-around rounded-[3px] bg-[#dbdfe1] px-[5px] text-[#5f7383]">
          <button type="button" aria-label="截图"><CameraIcon className="size-[10px]" strokeWidth={3} /></button>
          <button type="button" aria-label="录制" className="flex items-end">
            <VideoIcon className="size-[10px] fill-current" />
            <span className="-ml-1 size-[6px] rounded-full bg-[#44525d]" />
          </button>
          <button type="button" aria-label="录制设置" className="flex items-end">
            <VideoIcon className="size-[10px] fill-current" />
            <FaGear className="-ml-1 size-[7px] text-[#2f3b44]" />
          </button>
          <button type="button" aria-label="全屏"><ExpandIcon className="size-[9px]" strokeWidth={3} /></button>
        </div>
      </div>

      <p className="absolute -bottom-[2px] left-[308px] z-10 text-[26px] leading-[26px] whitespace-nowrap text-white [text-shadow:0_0_2px_#000]">
        福州晨丰科技有限公司
      </p>
    </main>
  )
}

function ElevationDial() {
  const ticks = Array.from({ length: 37 }, (_, i) => i * 5)
  return (
    <svg viewBox="0 0 120 56" className="mx-auto h-14 w-[120px]" role="img" aria-label="仰角 35">
      {ticks.map(deg => {
        const rad = (deg * Math.PI) / 180
        const major = deg % 30 === 0
        const x = 60 - 50 * Math.cos(rad)
        const y = 45 - 39 * Math.sin(rad)
        return (
          <rect
            key={deg}
            x={-2}
            y={major ? -1.5 : -0.5}
            width={major ? 5 : 3}
            height={major ? 3 : 1}
            fill={major ? "#cbd7e0" : "#dfe6eb"}
            transform={`translate(${x} ${y}) rotate(${deg})`}
          />
        )
      })}
      <path d="M23 17v4h-4z" fill="#33475a" />
    </svg>
  )
}

function RotationDial() {
  return (
    <svg viewBox="0 0 60 60" className="mx-auto my-[2px] size-[60px]" role="img" aria-label="旋转 315" fill="none">
      <circle cx="30" cy="30" r="26" stroke="#cbd7e0" />
      <g stroke="#33475a">
        <path d="M44.500 49v-5h5M44 44l5 5" />
        <circle cx="50" cy="50" r="2" />
        <path d="M50 45v2M50 53v2M45 50h2M53 50h2M46 46l2 2M54 46l-2 2M46 54l2-2M54 54l-2-2" />
      </g>
    </svg>
  )
}

function ScenePanel() {
  return (
    <section className="flex flex-1 flex-col bg-white pl-[3px] text-[6px] text-[#3b444b]">
      <SectionHeader title="天光" />
      <div className="mt-1 pl-px">
        <Field label="颜色:" value="#FFFFFF" width={COLOR_BOX}><ResetButton /></Field>
        <Field label="强度:" value="1" width={NUMBER_BOX}>
          <span className="flex pl-[5px]"><Slider label="天光强度" value={4} /></span>
          <ResetButton />
        </Field>
        <Field label="反弹:" value="3" width={NUMBER_BOX}>
          <span className="flex pl-[5px]"><Slider label="天光反弹" value={50} /></span>
          <ResetButton />
        </Field>
      </div>

      <hr className="mt-1 mr-[5px] border-[#dfe3e7]" />
      <SectionHeader title="太阳光" />
      <div className="mt-[2px] pl-px">
        <label className="flex h-[13px] items-center justify-between pr-1">显示太阳光助手<Toggle label="显示太阳光助手" /></label>
        <label className="flex h-[13px] items-center justify-between pr-1">显示太阳光阴影<Toggle label="显示太阳光阴影" on /></label>
        <div className="pt-px">
          <Field label="强度" value="50" width={NUMBER_BOX}>
            <span className="flex pl-[5px]"><Slider label="太阳光强度" value={31} /></span>
            <ResetButton />
          </Field>
          <Field label="反弹" value="3" width={NUMBER_BOX}>
            <span className="flex pl-[5px]"><Slider label="太阳光反弹" value={50} /></span>
            <ResetButton />
          </Field>
          <Field label="源角" value="0.5" width={NUMBER_BOX}>
            <span className="flex pl-[5px]"><Slider label="源角" value={4} /></span>
            <ResetButton />
          </Field>
          <Field label="颜色:" value="#FFFFFF" width={COLOR_BOX}><ResetButton /></Field>
          <Field label="色温:" value="6500K" width="w-[42px] px-1 text-[8px]"><ResetButton /></Field>
          <Field label="仰角:" value="35" width={NUMBER_BOX}>
            <Stepper />
            <span className="ml-auto pr-[18px]">
              <Select label="仰角预设" value="默认" className="h-[15px] w-[33px] pl-1 text-[7px]" />
            </span>
          </Field>
        </div>
      </div>
      <ElevationDial />
      <div className="pl-px">
        <Field label="旋转:" value="315" width={NUMBER_BOX}><Stepper /></Field>
      </div>
      <RotationDial />

      <hr className="mt-[2px] mr-[5px] border-[#dfe3e7]" />
      <SectionHeader title="曝光" />
      <label className="flex h-[15px] items-center gap-[7px]">
        自动曝光(眼球适应)
        <input type="checkbox" className="size-[9px] appearance-none rounded-[2px] border border-[#d0d6db] bg-white checked:bg-[#147dbe]" />
      </label>
      <div className="flex h-[18px] items-center">
        <label className="flex items-center gap-[5px]">
          曝光补偿:
          <input type="text" defaultValue="1" className="h-[15px] w-6 rounded-[1px] border border-[#d5dade] px-1 text-[8px]" />
        </label>
        <span className="flex pl-2"><Slider label="曝光补偿" value={44} plain /></span>
      </div>
      <div className="flex w-[136px] justify-between pl-[57px] leading-[8px]">
        <span>-3.0</span>
        <span>6.0</span>
      </div>
      <hr className="mt-1 mr-[5px] border-[#dfe3e7]" />

      <div className="mt-auto flex items-center gap-[2px] pr-[3px] pb-[3px]">
        <label htmlFor="preset" className="whitespace-nowrap">选择配置</label>
        <div className="relative flex-1">
          <select id="preset" className="block h-[15px] w-full appearance-none rounded-[2px] border border-[#d5dade] bg-white">
            <option></option>
          </select>
          <svg viewBox="0 0 4 3" className="absolute top-[6px] right-[5px] h-[3px] w-1 fill-[#33475a]"><path d="M2 0l2 3H0z" /></svg>
          <div className="absolute -top-[6px] right-[10px] flex size-6 items-center justify-center rounded-full bg-gradient-to-br from-[#2f80f5] to-[#5cc0fb]">
            <svg viewBox="0 0 24 24" className="size-6" fill="none" stroke="#d9efff">
              <path d="M2 12.500h8M14 12.500h8M11 13.500h2" />
              <path d="M14 4c3 0 5 2 6 4" opacity=".5" />
            </svg>
          </div>
        </div>
        <button type="button" className="h-[15px] w-[25px] rounded-[2px] bg-[#159153] text-[7px] font-medium text-white">保存</button>
        <button type="button" className="h-[15px] w-[25px] rounded-[2px] bg-[#dc3a3d] text-[7px] font-medium text-white">删除</button>
      </div>
    </section>
  )
}

function StatusBar() {
  const cell = "flex h-2 items-center gap-1 border-l border-[#b9c3cb] px-[6px]"
  return (
    <footer className="flex h-[22px] bg-[#dfe6ed] text-[6px] whitespace-nowrap text-[#333d45]">
      <p className="w-[129px] leading-[22px]">171125.925 , 0 , 64498.935</p>
      <div className="flex min-w-0 flex-1 flex-col">
        <div className="flex h-[14px] items-center">
          <StatusToggle label="灯光光照" />
          <StatusToggle label="灯光阴影" />
          <StatusToggle label="天空球" />
          <StatusToggle label="显示板件间尺寸" on />
          <StatusToggle label="切换布局" />
          <StatusToggle label="排钻反应器" />
          <div className={cell}>
            <button type="button" className="h-[9px] w-[34px] rounded-[1px] border border-[#d3dae0] bg-[#f9fafb] leading-[7px]">对象捕捉</button>
          </div>
          <div className={cell}>
            字体:
            <Select label="字体" value="默认(雅黑)" className="h-[9px] w-[51px] pl-1 leading-[7px]" />
          </div>
          <div className={cell}>
            线型:
            <Select label="线型" value="实线" className="h-[9px] w-10 pl-1 leading-[7px]" />
          </div>
          <StatusToggle label="正交(F8)" on />
          <StatusToggle label="亮显" on />
          <StatusToggle label="动态捕捉(F3)" on />
          <StatusToggle label="工具栏" on />
          <StatusToggle label="动态输入" on />
          <button type="button" className="ml-auto flex h-[13px] w-[47px] items-center justify-center gap-[3px] rounded-[2px] bg-[#f7f9fa] text-[7px] font-medium">
            <FaGear className="size-[9px] text-[#4b6478]" />
            工具管理
          </button>
        </div>
        <div className="flex h-2 items-center justify-end">
          <StatusToggle label="隐藏参数标注" />
          <StatusToggle label="选择编组" on />
          <StatusToggle label="捕捉穿透" />
          <StatusToggle label="智能UCS" on />
          <span className="w-[9px]" />
          <StatusToggle label="灯光助手" faded />
        </div>
      </div>
    </footer>
  )
}

export default function App() {
  return (
    <div className="flex min-h-screen flex-col overflow-hidden bg-[#f4f8fb] font-['Noto_Sans_CJK_SC',sans-serif]">
      <Header />

      {/* Ribbon */}
      <div className="flex h-[65px] bg-[#f4f8fb]">
        <RibbonGroup title="二维绘图" rows={DRAW_TOOLS} className="w-[181px] shrink-0" cols="-ml-[2px] w-[168px] grid-cols-8" />
        <RibbonGroup title="板件绘图" rows={BOARD_TOOLS} className="w-[394px] shrink-0" cols="w-[375px] grid-cols-18" />
        <RibbonGroup title="板件编辑" rows={EDIT_TOOLS} className="w-[334px] shrink-0" cols="grid-cols-16" />
        <RibbonGroup title="排钻" rows={DRILL_TOOLS} className="flex-1" cols="w-[84px] grid-cols-4" />
      </div>

      {/* Workspace */}
      <div className="flex flex-1">
        <aside className="flex w-10 shrink-0 overflow-hidden border-r border-[#9aa7b1]">
          <div className="-ml-[2px] grid w-[42px] shrink-0 grid-cols-2 grid-rows-14 pb-[23px]">
            {SIDE_TOOLS.map((tool, i) => <ToolButton key={i} tool={tool} />)}
          </div>
        </aside>

        <Viewport />

        <aside className="flex w-[183px] shrink-0">
          <nav className="flex w-4 flex-col bg-[#cedae1] text-[6px] leading-[8px] text-[#26323b]">
            {PANEL_TABS.map(lines => (
              <button
                key={lines.join("")}
                type="button"
                className={`flex flex-1 flex-col items-center justify-center whitespace-nowrap ${lines[0] === "场 景" ? "bg-[#f4f8fb]" : ""}`}
              >
                {lines.map(line => <span key={line}>{line}</span>)}
              </button>
            ))}
          </nav>
          <ScenePanel />
        </aside>
      </div>

      <StatusBar />
    </div>
  )
}
